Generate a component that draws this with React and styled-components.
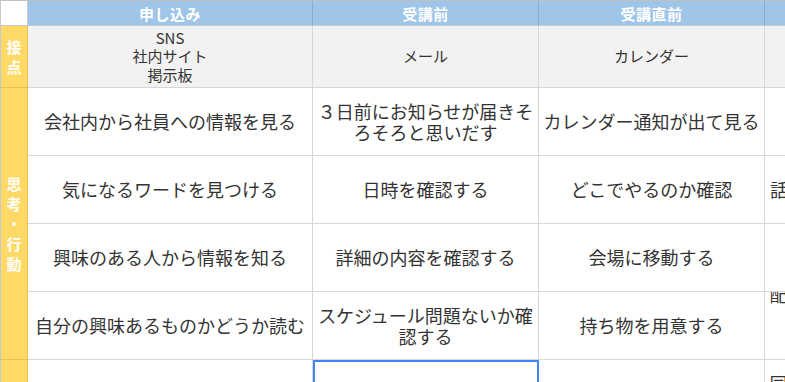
import React from "react";
import styled, { createGlobalStyle, css } from "styled-components";

const c = {
  grid: "#d6d6d6",
  edgeTop: "#c0c0c0",
  edgeLeft: "#c4c7cd",
  blue: "#9fc5e8",
  blueLine: "#86acd3",
  headBottom: "#c6ccd3",
  yellow: "#ffd966",
  yellowLine: "#e8c354",
  contact: "#f2f2f2",
  text: "#333333",
  select: "#4285f4",
};

const GlobalStyle = createGlobalStyle`
  html, body {
    margin: 0;
    padding: 0;
    background: #ffffff;
    overflow: hidden;
  }
  body {
    font-family: "Noto Sans CJK JP", "Noto Sans", sans-serif;
  }
`;

const Sheet = styled.div`
  display: grid;
  grid-template-columns: 27px 285px 226px 226px 226px;
  grid-template-rows: 25px 62px repeat(5, 68px);
  width: max-content;
  border-top: 1px solid ${c.edgeTop};
  border-left: 1px solid ${c.edgeLeft};
`;

const Cell = styled.div`
  box-sizing: border-box;
  min-width: 0;
  display: flex;
  align-items: center;
  justify-content: center;
  text-align: center;
  overflow: hidden;
  border-right: 1px solid ${c.grid};
  border-bottom: 1px solid ${c.grid};
`;

const Corner = styled(Cell)`
  background: #ffffff;
  border-right-color: #c8c8c8;
  border-bottom-color: #c8c8c8;
`;

const HeadCell = styled(Cell)`
  background: ${c.blue};
  border-right-color: ${c.blueLine};
  border-bottom-color: ${c.headBottom};
  color: #ffffff;
  font-size: 15px;
  font-weight: 700;
  letter-spacing: 0.5px;
`;

const LabelCell = styled(Cell)`
  grid-row: ${(p) => p.$row} / span ${(p) => p.$span || 1};
  background: ${c.yellow};
  border-right-color: ${c.yellowLine};
  border-bottom-color: ${c.yellowLine};
  padding: 0 2px;
  color: #ffffff;
  font-size: 15px;
  font-weight: 700;
  line-height: 20px;
  line-break: anywhere;
  word-break: break-all;
`;

const ContactCell = styled(Cell)`
  background: ${c.contact};
  color: ${c.text};
  font-size: 15px;
  line-height: 18.5px;
  white-space: pre-line;
`;

const BodyCell = styled(Cell)`
  background: #ffffff;
  color: ${c.text};
  font-size: 18px;
  line-height: 21px;
  padding: 0 3px;
  white-space: pre-line;
  ${(p) =>
    p.$selected &&
    css`
      outline: 2px solid ${c.select};
      outline-offset: -2px;
    `}
`;

const stages = ["申し込み", "受講前", "受講直前", "受講中"];
const contacts = ["SNS\n社内サイト\n掲示板", "メール", "カレンダー", "会場"];

const actions = [
  ["会社内から社員への情報を見る", "３日前にお知らせが届きそろそろと思いだす", "カレンダー通知が出て見る", ""],
  ["気になるワードを見つける", "日時を確認する", "どこでやるのか確認", "話す内容をメモにしておく"],
  ["興味のある人から情報を知る", "詳細の内容を確認する", "会場に移動する", ""],
  ["自分の興味あるものかどうか読む", "スケジュール問題ないか確認する", "持ち物を用意する", "配布資料があれば事前に目を\n通しておく\n質問を考える"],
  ["", "", "", "同僚と一緒に参加するか相談して決める"],
];

export default function App() {
  return (
    <>
      <GlobalStyle />
      <Sheet>
        <Corner />
        {stages.map((s) => (
          <HeadCell key={s}>{s}</HeadCell>
        ))}

        <LabelCell $row={2}>接点</LabelCell>
        {contacts.map((t, i) => (
          <ContactCell key={i}>{t}</ContactCell>
        ))}

        <LabelCell $row={3} $span={4}>思考・行動</LabelCell>
        {actions.slice(0, 4).map((row, r) =>
          row.map((t, i) => <BodyCell key={`${r}-${i}`}>{t}</BodyCell>)
        )}

        <LabelCell $row={7} />
        {actions[4].map((t, i) => (
          <BodyCell key={`last-${i}`} $selected={i === 1}>
            {t}
          </BodyCell>
        ))}
      </Sheet>
    </>
  );
}
